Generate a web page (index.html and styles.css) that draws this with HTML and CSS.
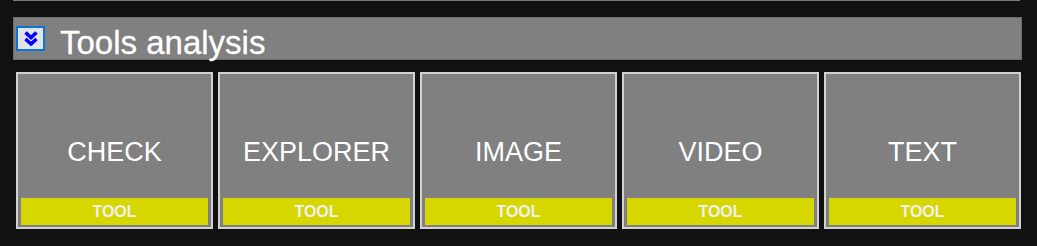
FILE: index.html
```html
<!DOCTYPE html>
<html>
<head>
<meta charset="utf-8">
<link rel="stylesheet" href="styles.css">
</head>
<body>
<div class="page">
  <div class="prev-line"></div>
  <div class="section-head">
    <span class="toggle">
      <svg width="14" height="15" viewBox="0 0 14 15">
        <polyline points="1.5,1.5 7,6.5 12.5,1.5" fill="none" stroke="#0000ff" stroke-width="3.6"/>
        <polyline points="1.5,8 7,13 12.5,8" fill="none" stroke="#0000ff" stroke-width="3.6"/>
      </svg>
    </span>
    <span class="title">Tools analysis</span>
  </div>
  <div class="tools">
    <div class="card"><div class="name">CHECK</div><div class="tag">TOOL</div></div>
    <div class="card"><div class="name">EXPLORER</div><div class="tag">TOOL</div></div>
    <div class="card"><div class="name">IMAGE</div><div class="tag">TOOL</div></div>
    <div class="card"><div class="name">VIDEO</div><div class="tag">TOOL</div></div>
    <div class="card"><div class="name">TEXT</div><div class="tag">TOOL</div></div>
  </div>
</div>
</body>
</html>
```

FILE: styles.css
```css
html, body {
  margin: 0;
  padding: 0;
  background: #111111;
  font-family: "Liberation Sans", Arial, sans-serif;
}
.page {
  width: 1037px;
  height: 246px;
  display: flex;
  flex-direction: column;
}
.prev-line {
  margin-left: 13px;
  width: 1007px;
  height: 1px;
  background: #7a7a7a;
}
.section-head {
  margin: 16px 0 0 13px;
  width: 1005px;
  height: 41px;
  background: #808080;
  border: 1px solid #6c6c6c;
  display: flex;
  align-items: center;
  padding-left: 2px;
  box-sizing: content-box;
}
.toggle {
  width: 25px;
  height: 21px;
  border: 2px solid #0a74da;
  background: #e3e3e3;
  display: flex;
  align-items: center;
  justify-content: center;
}
.title {
  margin-left: 15px;
  color: #ffffff;
  font-size: 33px;
  line-height: 1;
  padding-top: 8px;
  -webkit-text-stroke: 0.3px #ffffff;
}
.tools {
  margin: 12px 0 0 16px;
  width: 1005px;
  display: flex;
  gap: 5px;
}
.card {
  width: 197px;
  height: 157px;
  box-sizing: border-box;
  border: 2px solid #d2d2d2;
  background: #808080;
  display: flex;
  flex-direction: column;
}
.name {
  flex: 1;
  display: flex;
  align-items: center;
  justify-content: center;
  padding-top: 33px;
  color: #ffffff;
  font-size: 27px;
}
.tag {
  height: 27px;
  margin: 0 3px 2px 3px;
  background: #d6d600;
  color: #f0f0f0;
  font-weight: bold;
  font-size: 16px;
  display: flex;
  align-items: center;
  justify-content: center;
}
```
